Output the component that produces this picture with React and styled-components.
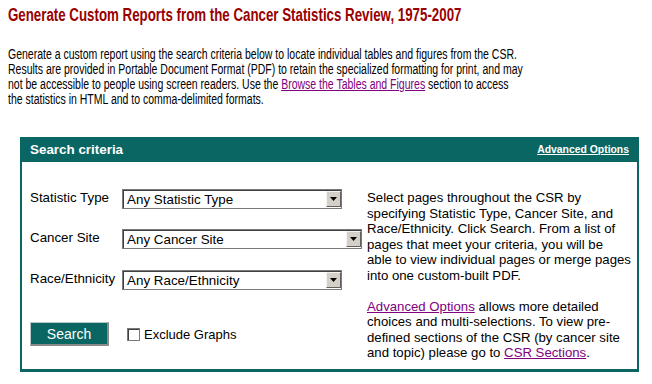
import React from "react";
import styled, { createGlobalStyle } from "styled-components";

const Global = createGlobalStyle`
  html, body { margin: 0; padding: 0; background: #ffffff; }
  body { font-family: "Liberation Sans", Arial, sans-serif; color: #000; }
`;

const TEAL = "#0a6663";

const Page = styled.div`
  padding: 4px 8px 0 8px;
  width: 636px;
`;

/* The reference uses a narrow (Arial Narrow–like) face for the heading and intro;
   emulate it by horizontally condensing Liberation Sans. */
const Title = styled.h1`
  margin: 0;
  font-size: 18px;
  line-height: 22px;
  font-weight: bold;
  color: #990000;
  white-space: nowrap;
  transform: scaleX(0.739);
  transform-origin: left top;
`;

const Intro = styled.p`
  margin: 20.5px 0 0 0;
  font-size: 14px;
  line-height: 15.2px;
  white-space: nowrap;
  transform: scaleX(0.75);
  transform-origin: left top;
`;

const Link = styled.a`
  color: #800080;
  text-decoration: underline;
`;

const Panel = styled.section`
  margin: 30px 0 0 12px;
  width: 619px;
`;

const Header = styled.div`
  height: 25px;
  background: ${TEAL};
  display: flex;
  align-items: center;
  justify-content: space-between;
  padding: 0 10px;
  color: #fff;
`;

const HeaderTitle = styled.h2`
  margin: 0;
  font-size: 13.4px;
  font-weight: bold;
`;

const HeaderLink = styled.a`
  color: #fff;
  font-size: 10.4px;
  font-weight: bold;
  text-decoration: underline;
`;

const Body = styled.div`
  border-left: 2px solid ${TEAL};
  border-right: 2px solid ${TEAL};
  border-bottom: 3px solid ${TEAL};
  padding: 27px 8px 8px 8px;
  display: flex;
`;

const LeftCol = styled.div`
  width: 341px;
  display: flex;
  flex-direction: column;
`;

const FieldRow = styled.div`
  display: flex;
  align-items: flex-start;
  margin-bottom: ${(p) => p.$gap}px;
`;

const Label = styled.label`
  width: 92px;
  padding-top: 1px;
  font-size: 13.33px;
  line-height: 15px;
`;

const SelectWrap = styled.div`
  position: relative;
  width: ${(p) => p.$w}px;
  height: 20px;
`;

const Select = styled.select`
  appearance: none;
  -webkit-appearance: none;
  box-sizing: border-box;
  width: 100%;
  height: 20px;
  margin: 0;
  padding: 0 20px 0 4px;
  border: 1px solid #7a7a7a;
  border-radius: 0;
  box-shadow: inset 1px 1px 0 #404040;
  background: #fff;
  font-family: "Liberation Sans", Arial, sans-serif;
  font-size: 13.4px;
  color: #000;
  outline: none;
`;

const Arrow = styled.span`
  position: absolute;
  top: 2px;
  right: 1px;
  width: 13px;
  height: 14px;
  background: #d4d0c8;
  border-top: 1px solid #f4f4f4;
  border-left: 1px solid #f4f4f4;
  border-right: 1px solid #606060;
  border-bottom: 1px solid #606060;
  pointer-events: none;
  display: flex;
  align-items: center;
  justify-content: center;
`;

const ActionRow = styled.div`
  display: flex;
  align-items: center;
  gap: 18px;
`;

const SearchButton = styled.button`
  box-sizing: border-box;
  width: 79px;
  height: 24px;
  background: ${TEAL};
  color: #fff;
  font-family: "Liberation Sans", Arial, sans-serif;
  font-size: 14px;
  padding: 0;
  border-top: 1px solid #b8c8c8;
  border-left: 1px solid #b8c8c8;
  border-right: 2px solid #8a8a8a;
  border-bottom: 2px solid #8a8a8a;
  cursor: pointer;
`;

const CheckLabel = styled.label`
  display: flex;
  align-items: center;
  gap: 4px;
  font-size: 13px;
`;

const Check = styled.input`
  appearance: none;
  -webkit-appearance: none;
  width: 13px;
  height: 13px;
  margin: 0;
  border: 1px solid #7a7a7a;
  box-shadow: inset 1px 1px 0 #404040;
  background: #fff;
`;

const RightCol = styled.div`
  width: 262px;
  font-size: 13.2px;
  line-height: 15.5px;
  margin-top: 1px;
  white-space: nowrap;
`;

const Para = styled.p`
  margin: 0 0 15.5px 0;
  &:last-child { margin-bottom: 0; }
`;

function DropDown({ width, value }) {
  return (
    <SelectWrap $w={width}>
      <Select defaultValue={value}>
        <option>{value}</option>
      </Select>
      <Arrow>
        <svg width="7" height="4" viewBox="0 0 7 4">
          <polygon points="0,0 7,0 3.5,4" fill="#000" />
        </svg>
      </Arrow>
    </SelectWrap>
  );
}

export default function App() {
  return (
    <>
      <Global />
      <Page>
        <Title>Generate Custom Reports from the Cancer Statistics Review, 1975-2007</Title>
        <Intro>
          Generate a custom report using the search criteria below to locate individual tables and figures from the CSR.
          <br />
          Results are provided in Portable Document Format (PDF) to retain the specialized formatting for print, and may
          <br />
          not be accessible to people using screen readers. Use the <Link href="#">Browse the Tables and Figures</Link> section to access
          <br />
          the statistics in HTML and to comma-delimited formats.
        </Intro>
        <Panel>
          <Header>
            <HeaderTitle>Search criteria</HeaderTitle>
            <HeaderLink href="#">Advanced Options</HeaderLink>
          </Header>
          <Body>
            <LeftCol>
              <FieldRow $gap={20}>
                <Label>Statistic Type</Label>
                <DropDown width={220} value="Any Statistic Type" />
              </FieldRow>
              <FieldRow $gap={21}>
                <Label>Cancer Site</Label>
                <DropDown width={240} value="Any Cancer Site" />
              </FieldRow>
              <FieldRow $gap={32}>
                <Label>Race/Ethnicity</Label>
                <DropDown width={220} value="Any Race/Ethnicity" />
              </FieldRow>
              <ActionRow>
                <SearchButton>Search</SearchButton>
                <CheckLabel>
                  <Check type="checkbox" />
                  Exclude Graphs
                </CheckLabel>
              </ActionRow>
            </LeftCol>
            <RightCol>
              <Para>
                Select pages throughout the CSR by
                <br />
                specifying Statistic Type, Cancer Site, and
                <br />
                Race/Ethnicity. Click Search. From a list of
                <br />
                pages that meet your criteria, you will be
                <br />
                able to view individual pages or merge pages
                <br />
                into one custom-built PDF.
              </Para>
              <Para>
                <Link href="#">Advanced Options</Link> allows more detailed
                <br />
                choices and multi-selections. To view pre-
                <br />
                defined sections of the CSR (by cancer site
                <br />
                and topic) please go to <Link href="#">CSR Sections</Link>.
              </Para>
            </RightCol>
          </Body>
        </Panel>
      </Page>
    </>
  );
}
